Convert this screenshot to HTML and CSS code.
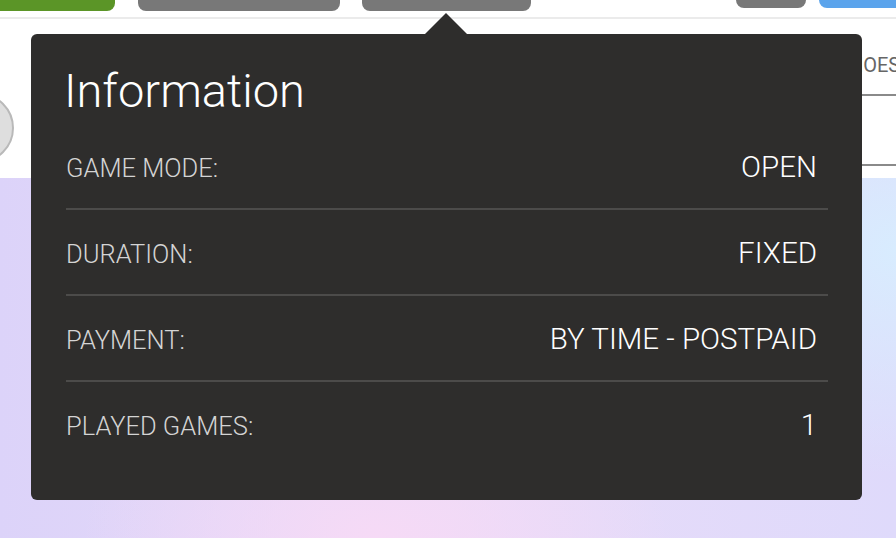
FILE: index.html
```html
<!DOCTYPE html>
<html lang="en">
<head>
<meta charset="utf-8">
<title>Information</title>
<link rel="stylesheet" href="styles.css">
</head>
<body>
<div class="page">
  <header class="topbar">
    <span class="btn btn-green"></span>
    <span class="btn btn-gray btn-a"></span>
    <span class="btn btn-gray btn-b"></span>
    <span class="btn btn-gray btn-c"></span>
    <span class="btn btn-blue"></span>
  </header>
  <section class="panel">
    <div class="avatar"></div>
    <div class="side">
      <div class="side-title">SHOES</div>
      <div class="side-line"></div>
      <div class="side-gap"></div>
      <div class="side-line"></div>
    </div>
  </section>
  <main class="backdrop"></main>

  <div class="tooltip">
    <h2 class="tt-title">Information</h2>
    <div class="tt-row"><span class="tt-label">GAME MODE:</span><span class="tt-value">OPEN</span></div>
    <div class="tt-row"><span class="tt-label">DURATION:</span><span class="tt-value">FIXED</span></div>
    <div class="tt-row"><span class="tt-label">PAYMENT:</span><span class="tt-value">BY TIME - POSTPAID</span></div>
    <div class="tt-row tt-last"><span class="tt-label">PLAYED GAMES:</span><span class="tt-value">1</span></div>
  </div>
</div>
</body>
</html>
```
FILE: styles.css
```css
* { box-sizing: border-box; }
html, body { margin: 0; padding: 0; }
body {
  width: 896px;
  height: 538px;
  overflow: hidden;
  font-family: Roboto, "Liberation Sans", sans-serif;
  background: #fff;
}
.page {
  position: relative;
  width: 896px;
  height: 538px;
  display: flex;
  flex-direction: column;
}
.topbar {
  height: 19px;
  border-bottom: 2px solid #ebebeb;
  display: flex;
  align-items: flex-start;
  flex: none;
}
.btn { display: block; flex: none; }
.btn-green {
  width: 115px; height: 11px;
  background: #5b9527;
  border-radius: 0 0 8px 0;
}
.btn-gray { background: #787878; border-radius: 0 0 8px 8px; }
.btn-a { margin-left: 23px; width: 202px; height: 11px; }
.btn-b { margin-left: 22px; width: 169px; height: 11px; }
.btn-c { margin-left: auto; width: 70px; height: 8px; }
.btn-blue {
  margin-left: 13px; width: 77px; height: 8px;
  background: #5ba4ec;
  border-radius: 0 0 0 8px;
}
.panel {
  height: 159px;
  flex: none;
  display: flex;
  justify-content: space-between;
  background: #fff;
}
.avatar {
  margin-top: 74px;
  margin-left: -56px;
  width: 70px; height: 70px;
  border-radius: 50%;
  background: #dedede;
  border: 2px solid #b9b9b9;
}
.side {
  width: 60px;
  padding-top: 34px;
  display: flex;
  flex-direction: column;
}
.side-title {
  font-size: 20px;
  color: #666;
  line-height: 24px;
  white-space: nowrap;
  margin-left: 1px;
}
.side-line { height: 2px; background: #8a8a8a; margin-top: 17px; }
.side-gap { height: 51px; }
.backdrop {
  flex: 1;
  background:
    radial-gradient(ellipse 420px 260px at 42% 100%, rgba(246, 218, 246, 1), rgba(246, 218, 246, 0) 70%),
    radial-gradient(ellipse 300px 300px at 100% 20%, rgba(216, 236, 254, 1), rgba(216, 236, 254, 0) 75%),
    linear-gradient(90deg, #dcd3f9 0%, #e8dbf8 50%, #dfdafb 100%);
}
.tooltip {
  position: absolute;
  left: 31px;
  top: 34px;
  width: 831px;
  height: 466px;
  background: #2e2d2c;
  border-radius: 6px;
  padding: 30px 34px 0 35px;
  color: #fff;
  display: flex;
  flex-direction: column;
}
.tooltip::before {
  content: "";
  position: absolute;
  left: 394px;
  top: -21px;
  width: 0; height: 0;
  border-left: 21px solid transparent;
  border-right: 21px solid transparent;
  border-bottom: 21px solid #2e2d2c;
}
.tt-title {
  margin: 0 0 6px -2px;
  font-size: 47px;
  font-weight: 300;
  line-height: 54px;
  color: #fff;
}
.tt-row {
  display: flex;
  justify-content: space-between;
  align-items: baseline;
  height: 86px;
  padding: 29px 11px 0 0;
  border-bottom: 2px solid #4c4b4a;
  font-weight: 300;
}
.tt-last { border-bottom: none; }
.tt-label { color: #d4d4d4; font-size: 25.5px; line-height: 30px; }
.tt-value { color: #fff; font-size: 29.5px; line-height: 27px; font-weight: 300; }
```
